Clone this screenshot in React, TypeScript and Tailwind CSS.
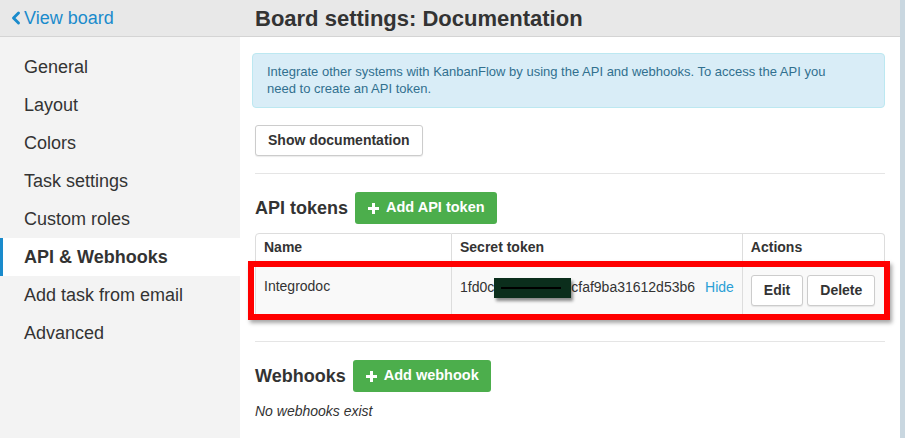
import { ChevronLeft } from 'lucide-react';

const NAV = ['General', 'Layout', 'Colors', 'Task settings', 'Custom roles', 'API & Webhooks', 'Add task from email', 'Advanced'];
const ACTIVE = 'API & Webhooks';

function GreenButton({ label }: { label: string }) {
  return (
    <button className="flex items-center gap-1.5 h-[32px] px-3 rounded-[3px] bg-[#4cae4c] text-white text-[14.5px] font-bold">
      <svg width="13" height="13" viewBox="0 0 13 13">
        <path d="M6.5 1v11M1 6.5h11" stroke="white" strokeWidth="3" />
      </svg>
      {label}
    </button>
  );
}

function GrayButton({ label, className = '' }: { label: string; className?: string }) {
  return (
    <button className={`h-[31px] px-3 rounded-[3px] border border-[#ccc] bg-white text-[14px] font-bold text-[#333] shadow-[0_1px_1px_rgba(0,0,0,0.08)] ${className}`}>
      {label}
    </button>
  );
}

export default function App() {
  return (
    <div className="w-[905px] h-[438px] overflow-hidden flex flex-col bg-white text-[#333] font-['Liberation_Sans',Arial,sans-serif] relative">
      {/* Top bar */}
      <div className="h-[37px] shrink-0 flex items-center bg-[#e8e8e8] border-b border-[#d4d4d4]">
        <a className="w-[240px] flex items-center pl-[6px] text-[18px] text-[#1a8bcc]">
          <ChevronLeft size={20} strokeWidth={3.5} className="mr-[-2px]" />
          View board
        </a>
        <h1 className="pl-[15px] text-[22px] font-bold text-[#333]">Board settings: Documentation</h1>
      </div>

      <div className="flex flex-1 min-h-0">
        {/* Sidebar */}
        <nav className="w-[240px] shrink-0 bg-[#f3f3f3] pt-[11px]">
          {NAV.map((item) =>
            item === ACTIVE ? (
              <div key={item} className="h-[38px] flex items-center pl-[21px] text-[18px] bg-white font-bold border-l-[3px] border-[#1a8bcc]">
                {item}
              </div>
            ) : (
              <div key={item} className="h-[38px] flex items-center pl-[24px] text-[18px]">
                {item}
              </div>
            )
          )}
        </nav>

        {/* Content */}
        <main className="flex-1 pl-[15px] pr-[15px] pt-[15px]">
          <div className="ml-[-3px] mt-[1px] rounded-[4px] border border-[#bce8f1] bg-[#d9edf7] px-[14px] pt-[9px] pb-[10px] text-[13px] leading-[17px] text-[#31708f]">
            Integrate other systems with KanbanFlow by using the API and webhooks. To access the API you
            <br />
            need to create an API token.
          </div>

          <GrayButton label="Show documentation" className="mt-[17px] h-[31px]" />

          <hr className="mt-[17px] border-[#e5e5e5]" />

          <div className="mt-[18px] flex items-center gap-[7px]">
            <h2 className="text-[18px] font-bold">API tokens</h2>
            <GreenButton label="Add API token" />
          </div>

          <div className="relative mt-[9px]">
            <table className="w-full border-separate border-spacing-0 text-[14px]">
              <thead>
                <tr className="h-[29px]">
                  <th className="w-[197px] border border-[#ddd] rounded-tl-[4px] px-2 text-left font-bold">Name</th>
                  <th className="w-[289px] border-y border-r border-[#ddd] px-2 text-left font-bold">Secret token</th>
                  <th className="border-y border-r border-[#ddd] rounded-tr-[4px] px-2 text-left font-bold">Actions</th>
                </tr>
              </thead>
              <tbody>
                <tr className="h-[56px] bg-[#f9f9f9]">
                  <td className="border-x border-b border-[#ddd] px-2 align-top pt-[14px]">Integrodoc</td>
                  <td className="border-r border-b border-[#ddd] px-2 align-top pt-[14px]">
                    <span className="inline-flex items-center">
                      1fd0c
                      <span className="relative inline-flex items-center w-[77px] h-[20px] bg-[#0b2e1c] shadow-[2px_3px_3px_rgba(0,0,0,0.45)] mt-[2px]">
                        <span className="mx-[7px] block h-[2px] w-[60px] bg-black" />
                      </span>
                      cfaf9ba31612d53b6
                      <a className="ml-[10px] text-[#2a9fd6]">Hide</a>
                    </span>
                  </td>
                  <td className="border-r border-b border-[#ddd] px-2 align-middle">
                    <div className="flex gap-1 pt-[2px]">
                      <GrayButton label="Edit" />
                      <GrayButton label="Delete" />
                    </div>
                  </td>
                </tr>
              </tbody>
            </table>
            {/* highlight frame over the token row */}
            <div className="absolute left-[-7px] right-[-5px] top-[28px] h-[59px] border-[6px] border-[#ff0000] shadow-[2px_3px_4px_rgba(0,0,0,0.35)] pointer-events-none" />
          </div>

          <hr className="mt-[23px] border-[#e5e5e5]" />

          <div className="mt-[18px] flex items-center gap-[7px]">
            <h2 className="text-[18px] font-bold">Webhooks</h2>
            <GreenButton label="Add webhook" />
          </div>
          <p className="mt-[9px] text-[14px] italic">No webhooks exist</p>
        </main>
        <div className="w-[5px] shrink-0" />
      </div>
      <div className="absolute top-0 right-0 w-[5px] h-full bg-[#c9d7e0]" />
    </div>
  );
}
